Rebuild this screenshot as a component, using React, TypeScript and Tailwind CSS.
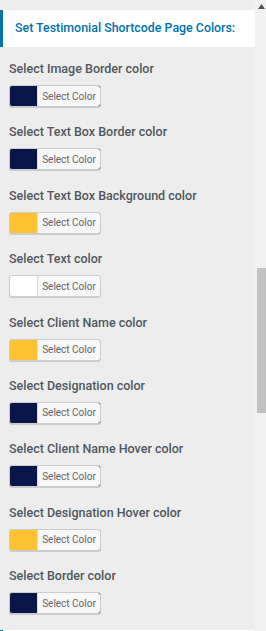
const rows: { label: string; color: string }[] = [
  { label: "Select Image Border color", color: "#08164a" },
  { label: "Select Text Box Border color", color: "#08164a" },
  { label: "Select Text Box Background color", color: "#fdc231" },
  { label: "Select Text color", color: "#ffffff" },
  { label: "Select Client Name color", color: "#fdc231" },
  { label: "Select Designation color", color: "#08164a" },
  { label: "Select Client Name Hover color", color: "#08164a" },
  { label: "Select Designation Hover color", color: "#fdc231" },
  { label: "Select Border color", color: "#08164a" },
];

function ColorButton({ color }: { color: string }) {
  return (
    <button
      type="button"
      className="flex h-[22px] w-[92px] items-start overflow-hidden rounded-[3px] border border-[#ccc] shadow-[0_1px_0_#ccc]"
      style={{ backgroundColor: color }}
    >
      <span className="ml-[27px] flex h-[20px] flex-1 items-center justify-center rounded-r-[2px] border-l border-[#ddd] bg-[#f7f7f7] text-[10px] text-[#666]">
        Select Color
      </span>
    </button>
  );
}

export default function App() {
  return (
    <div className="flex h-[631px] w-[266px] overflow-hidden bg-[#ededed] font-['Roboto',sans-serif]">
      <div className="w-[255px] shrink-0">
        <div className="mt-[10px] flex h-[37px] items-center border-l-[3px] border-[#0073aa] bg-white pl-[12px] text-[12.4px] font-medium text-[#0073aa]">
          Set Testimonial Shortcode Page Colors:
        </div>
        <div className="pt-[13px]">
          {rows.map((row) => (
            <div key={row.label} className="h-[63.375px] pl-[9px]">
              <div className="h-[18px] text-[12.5px] leading-[18px] font-medium text-[#50575e]">{row.label}</div>
              <div className="mt-[7px]">
                <ColorButton color={row.color} />
              </div>
            </div>
          ))}
        </div>
        <div className="h-[20px] border-l-[3px] border-[#0073aa] bg-white" />
      </div>
      <div className="relative w-[11px] bg-[#f1f1f1]">
        <svg className="absolute left-[3px] top-[4px]" width="7" height="5" viewBox="0 0 7 5">
          <path d="M3.5 0 L7 5 L0 5 Z" fill="#505050" />
        </svg>
        <div className="absolute left-[2px] top-[268px] h-[145px] w-[9px] bg-[#c1c1c1]" />
      </div>
    </div>
  );
}
